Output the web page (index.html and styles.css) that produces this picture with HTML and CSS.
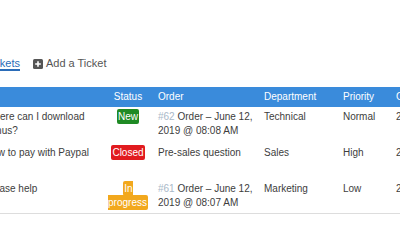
FILE: index.html
```html
<!DOCTYPE html>
<html lang="en">
<head>
    <meta charset="UTF-8">
    <title>Tickets</title>
    <link rel="stylesheet" href="styles.css">
</head>
<body>
    <div class="page">
        <!-- tabs -->
        <nav class="tabs">
            <a class="tab active" href="#">My Tickets</a>
            <a class="tab" href="#">
                <svg class="icon" width="10" height="10" viewBox="0 0 10 10">
                    <rect x="0" y="0" width="10" height="10" rx="1.5" fill="#555"/>
                    <path d="M5 2.2v5.6M2.2 5h5.6" stroke="#fff" stroke-width="1.6"/>
                </svg>
                Add a Ticket
            </a>
        </nav>

        <table class="tickets">
            <colgroup>
                <col class="c-subject">
                <col class="c-status">
                <col class="c-order">
                <col class="c-dept">
                <col class="c-prio">
                <col class="c-created">
            </colgroup>
            <thead>
                <tr>
                    <th>Subject Number</th>
                    <th class="center">Status</th>
                    <th>Order</th>
                    <th>Department</th>
                    <th>Priority</th>
                    <th>Created</th>
                </tr>
            </thead>
            <tbody>
                <tr>
                    <td>Where can I download bonus?</td>
                    <td class="center"><span class="badge new">New</span></td>
                    <td><span class="num">#62</span> Order – June 12, 2019 @ 08:08 AM</td>
                    <td>Technical</td>
                    <td>Normal</td>
                    <td>2019-06-12 08:08</td>
                </tr>
                <tr>
                    <td>How to pay with Paypal</td>
                    <td class="center"><span class="badge closed">Closed</span></td>
                    <td>Pre-sales question</td>
                    <td>Sales</td>
                    <td>High</td>
                    <td>2019-06-12 08:08</td>
                </tr>
                <tr>
                    <td>Please help</td>
                    <td class="center"><span class="badge progress">In progress</span></td>
                    <td><span class="num">#61</span> Order – June 12, 2019 @ 08:07 AM</td>
                    <td>Marketing</td>
                    <td>Low</td>
                    <td>2019-06-12 08:07</td>
                </tr>
            </tbody>
        </table>
    </div>
</body>
</html>
```

FILE: styles.css
```css
/* Ticket list */
html, body {
    margin: 0;
    padding: 0;
    overflow: hidden;
    background-color: #fff;
}
body {
    font-family: "Liberation Sans", Arial, sans-serif;
    color: #3d3d3d;
}
.page {
    margin-left: -20px;
    padding-top: 58px;
}
.tabs {
    display: flex;
    align-items: flex-start;
    gap: 13px;
    margin-left: -12px;
    margin-bottom: 16px;
    font-size: 11px;
    line-height: 11px;
}
.tab {
    display: flex;
    align-items: center;
    gap: 3px;
    color: #555;
    text-decoration: none;
    border-bottom: 2px solid transparent;
}
.tab.active {
    color: #2b6cb8;
    border-bottom-color: #2b6cb8;
}
.icon {
    display: block;
}
.tickets {
    table-layout: fixed;
    width: 511px;
    border-collapse: collapse;
    font-size: 10px;
    line-height: 14px;
    border-bottom: 1px solid #ddd;
}
.c-subject { width: 123px; }
.c-status { width: 50px; }
.c-order { width: 106px; }
.c-dept { width: 79px; }
.c-prio { width: 53px; }
.c-created { width: 100px; }
.tickets th {
    background-color: #3a8bdb;
    color: #fff;
    font-weight: normal;
    text-align: left;
    padding: 3px 5px;
    white-space: nowrap;
    overflow: hidden;
}
.tickets th:first-child {
    text-indent: -60px;
}
.tickets td {
    padding: 3px 5px 5px;
    vertical-align: top;
    height: 28px;
}
.tickets tbody tr:last-child td {
    padding-bottom: 3px;
}
.tickets .center {
    text-align: center;
}
.num {
    color: #a9b8c8;
}
.badge {
    color: #fff;
    padding: 2px 1px;
    border-radius: 2px;
}
.badge.new {
    background-color: #1f8a24;
}
.badge.closed {
    background-color: #e11b1f;
}
.badge.progress {
    background-color: #f2a81d;
}
```
